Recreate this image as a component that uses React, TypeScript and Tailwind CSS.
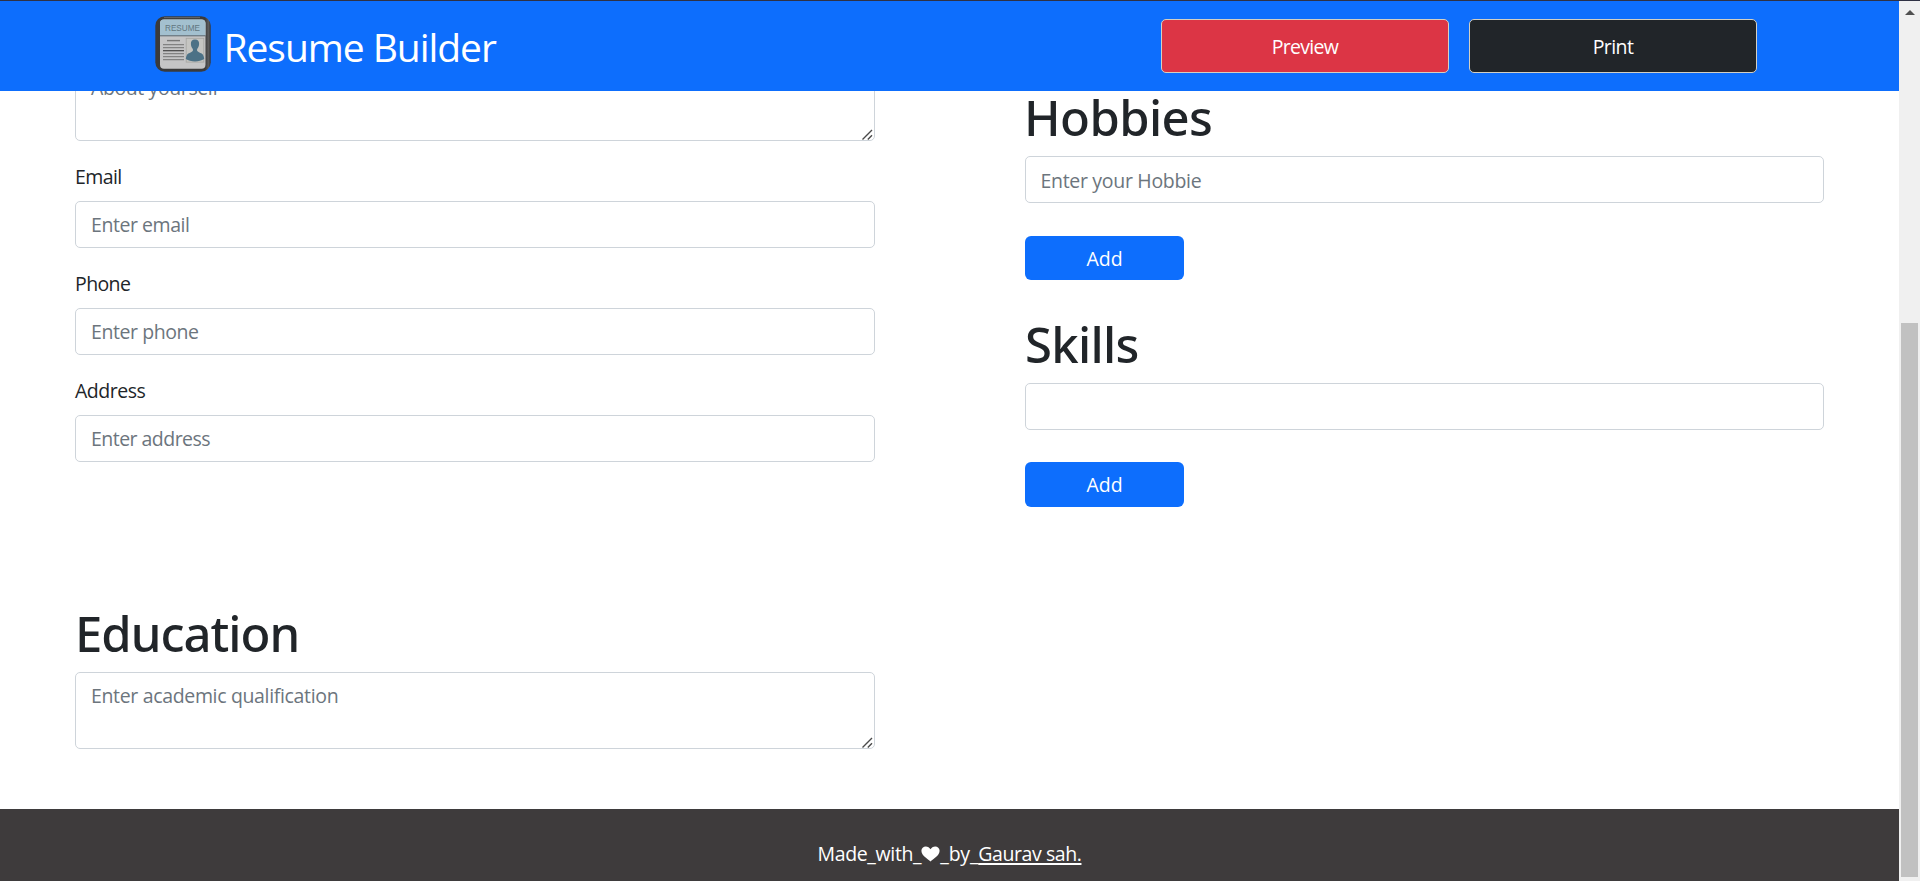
import React from "react";

const field =
  "block w-full rounded-[5px] border border-[#ced4da] bg-white px-[15px] text-[19.5px] leading-[30px] text-[#212529] placeholder:text-[#6c757d] placeholder:opacity-100 outline-none";
const inputClass = `${field} h-[47px]`;

function Heading({ children, className }: { children: React.ReactNode; className: string }) {
  return (
    <h1
      className={`mb-[8px] h-[62px] font-['Noto_Sans',sans-serif] text-[49px] leading-[62px] font-medium text-[#212529] ${className}`}
    >
      {children}
    </h1>
  );
}

function TextArea({ placeholder, className }: { placeholder: string; className: string }) {
  return (
    <div className="relative">
      <textarea
        className={`${field} h-[77px] resize-none overflow-hidden py-[7.5px] ${className}`}
        placeholder={placeholder}
      />
      <svg width="11" height="11" viewBox="0 0 11 11" className="absolute right-[2px] bottom-[1px]">
        <path d="M0.500 10.500L10 1M5.800 10.500L10 6.300" stroke="#4a4a4a" strokeWidth="1.4" fill="none" />
      </svg>
    </div>
  );
}

function LabeledInput({
  label,
  placeholder,
  labelClass,
  inputSpacing,
}: {
  label: string;
  placeholder: string;
  labelClass: string;
  inputSpacing: string;
}) {
  return (
    <div className="mt-[21px]">
      <label className={`mb-[9px] block text-[19.5px] leading-[30px] text-[#212529] ${labelClass}`}>{label}</label>
      <input className={`${inputClass} pt-[7px] pb-[8px] ${inputSpacing}`} placeholder={placeholder} />
    </div>
  );
}

function Logo() {
  return (
    <svg width="56" height="56" viewBox="0 0 56 56" className="block shrink-0">
      <defs>
        <linearGradient id="frame" x1="0" x2="1" y1="0" y2="0">
          <stop offset="0" stopColor="#3a3a3b" />
          <stop offset="0.9" stopColor="#3b3b3c" />
          <stop offset="0.96" stopColor="#5c5c5d" />
          <stop offset="1" stopColor="#333334" />
        </linearGradient>
      </defs>
      <rect x="0.3" y="0.3" width="55.4" height="55.4" rx="9.5" fill="url(#frame)" />
      <path d="M9 1.6h36" stroke="#66686a" strokeWidth="1" />
      <rect x="5" y="3.5" width="45.500" height="49.3" rx="4" fill="#c5c5c6" />
      <path d="M5 19.5V7.5a4 4 0 0 1 4-4h37.500a4 4 0 0 1 4 4v12z" fill="#a3c0cf" />
      <path d="M5 19.8h45.500" stroke="#4d5b63" strokeWidth="0.9" />
      <text
        x="27.5"
        y="15.4"
        textAnchor="middle"
        fontFamily="Liberation Sans, sans-serif"
        fontSize="9.8"
        textLength="35"
        lengthAdjust="spacingAndGlyphs"
        fill="#617680"
      >
        RESUME
      </text>
      <path d="M12 24.6h13" stroke="#777" strokeWidth="1.4" />
      <path d="M8 28.7h21M8 31.7h21M8 37.7h21M8 40.7h21M8 43.6h21" stroke="#828282" strokeWidth="1.3" />
      <path d="M8 34.7h21" stroke="#454545" strokeWidth="1.2" />
      <rect x="31.2" y="22.3" width="17.6" height="23.8" fill="#c5c5c2" stroke="#a5a5a2" strokeWidth="0.8" />
      <path
        d="M40 23.4c-3 0-4.3 2-4.1 4.6.1 2.2.8 3.8 2 5v1.7c-.6 1.3-2.9 1.8-4.6 2.9-1.7 1.2-2.300 3.400-2.500 5.400 2.400 1.700 5.700 2.400 9.200 2.400s6.800-.7 9.200-2.400c-.2-2-.8-4.200-2.500-5.400-1.700-1.100-4-1.600-4.600-2.900v-1.700c1.200-1.200 1.900-2.800 2-5 .2-2.600-1.100-4.600-4.100-4.600z"
        fill="#4c7186"
      />
    </svg>
  );
}

export default function App() {
  return (
    <div className="flex h-[881px] w-full flex-col overflow-hidden border-t border-[#2f3143] bg-white font-['Open_Sans','Noto_Sans',sans-serif]">
      <div className="flex min-h-0 flex-1">
        <div className="flex min-w-0 flex-1 flex-col">
          <header className="flex h-[90px] shrink-0 items-center bg-[#0d6efd] pr-[142px] pl-[155px] text-white">
            <div className="-mt-[4px]">
              <Logo />
            </div>
            <div className="mt-px ml-[12.5px] text-[39px] leading-[60px] tracking-[-1.06px] whitespace-nowrap">
              Resume Builder
            </div>
            <div className="ml-auto flex gap-[20px]">
              <button className="h-[54px] w-[288px] rounded-[5px] border border-[#d3d0c4] bg-[#dc3545] pt-[2px] text-[19.5px] tracking-[-0.72px]">
                Preview
              </button>
              <button className="h-[54px] w-[288px] rounded-[5px] border border-[#d3d0c4] bg-[#212529] pt-[2px] text-[19.5px] tracking-[-0.6px]">
                Print
              </button>
            </div>
          </header>

          <main className="flex h-[718px] shrink-0 gap-[150px] overflow-hidden pr-[75px] pl-[75px]">
            <section className="-mt-[27px] w-[800px] shrink-0">
              <TextArea className="tracking-[-0.4px]" placeholder="About yourself" />
              <LabeledInput
                label="Email"
                placeholder="Enter email"
                labelClass="tracking-[-0.57px]"
                inputSpacing="tracking-[-0.44px]"
              />
              <LabeledInput
                label="Phone"
                placeholder="Enter phone"
                labelClass="tracking-[-0.6px]"
                inputSpacing="tracking-[-0.43px]"
              />
              <LabeledInput
                label="Address"
                placeholder="Enter address"
                labelClass="tracking-[-0.48px]"
                inputSpacing="tracking-[-0.53px]"
              />
              <div className="pt-[140px]">
                <Heading className="tracking-[-1px]">Education</Heading>
                <TextArea className="tracking-[-0.34px]" placeholder="Enter academic qualification" />
              </div>
            </section>

            <section className="-mt-[5px] min-w-0 flex-1">
              <Heading className="-ml-px tracking-[-0.6px]">Hobbies</Heading>
              <input
                className={`${inputClass} pt-[8px] pb-[7px] pl-[14.5px] tracking-[-0.31px]`}
                placeholder="Enter your Hobbie"
              />
              <button className="mt-[33px] block h-[44px] w-[159px] rounded-[6px] bg-[#0d6efd] pt-[2px] text-[19.5px] text-white">
                Add
              </button>
              <div className="pt-[33px]">
                <Heading className="tracking-[-0.7px]">Skills</Heading>
                <input className={inputClass} />
                <button className="mt-[32px] block h-[45px] w-[159px] rounded-[6px] bg-[#0d6efd] text-[19.5px] text-white">
                  Add
                </button>
              </div>
            </section>
          </main>

          <footer className="flex flex-1 items-start justify-center bg-[#3e3b3c] pt-[30px] text-[19.5px] leading-[30px] whitespace-pre text-white">
            <span className="tracking-[-0.35px]">Made_with_</span>
            <svg width="19" height="16" viewBox="0 0 19 16" className="mt-[7px]">
              <path
                d="M9.5 15.5C7 13.3.4 9.6.4 4.800.4 2.200 2.400.4 4.800.4c2 0 3.800 1.100 4.700 2.900C10.400 1.500 12.200.4 14.200.4c2.400 0 4.400 1.800 4.400 4.400 0 4.800-6.600 8.500-9.100 10.700z"
                fill="#fff"
              />
            </svg>
            <span className="tracking-[-0.2px]">_by_</span>
            <a className="tracking-[-0.42px] underline decoration-2 underline-offset-[2px]">Gaurav sah.</a>
          </footer>
        </div>

        <div className="flex w-[21px] shrink-0 flex-col items-center bg-[#f0f0f0]">
          <svg width="10" height="5" viewBox="0 0 10 5" className="mt-[9px] shrink-0">
            <path d="M5 0l5 5H0z" fill="#505050" />
          </svg>
          <div className="mt-[308px] h-[554px] w-[17px] bg-[#c1c1c1]" />
        </div>
      </div>
    </div>
  );
}
